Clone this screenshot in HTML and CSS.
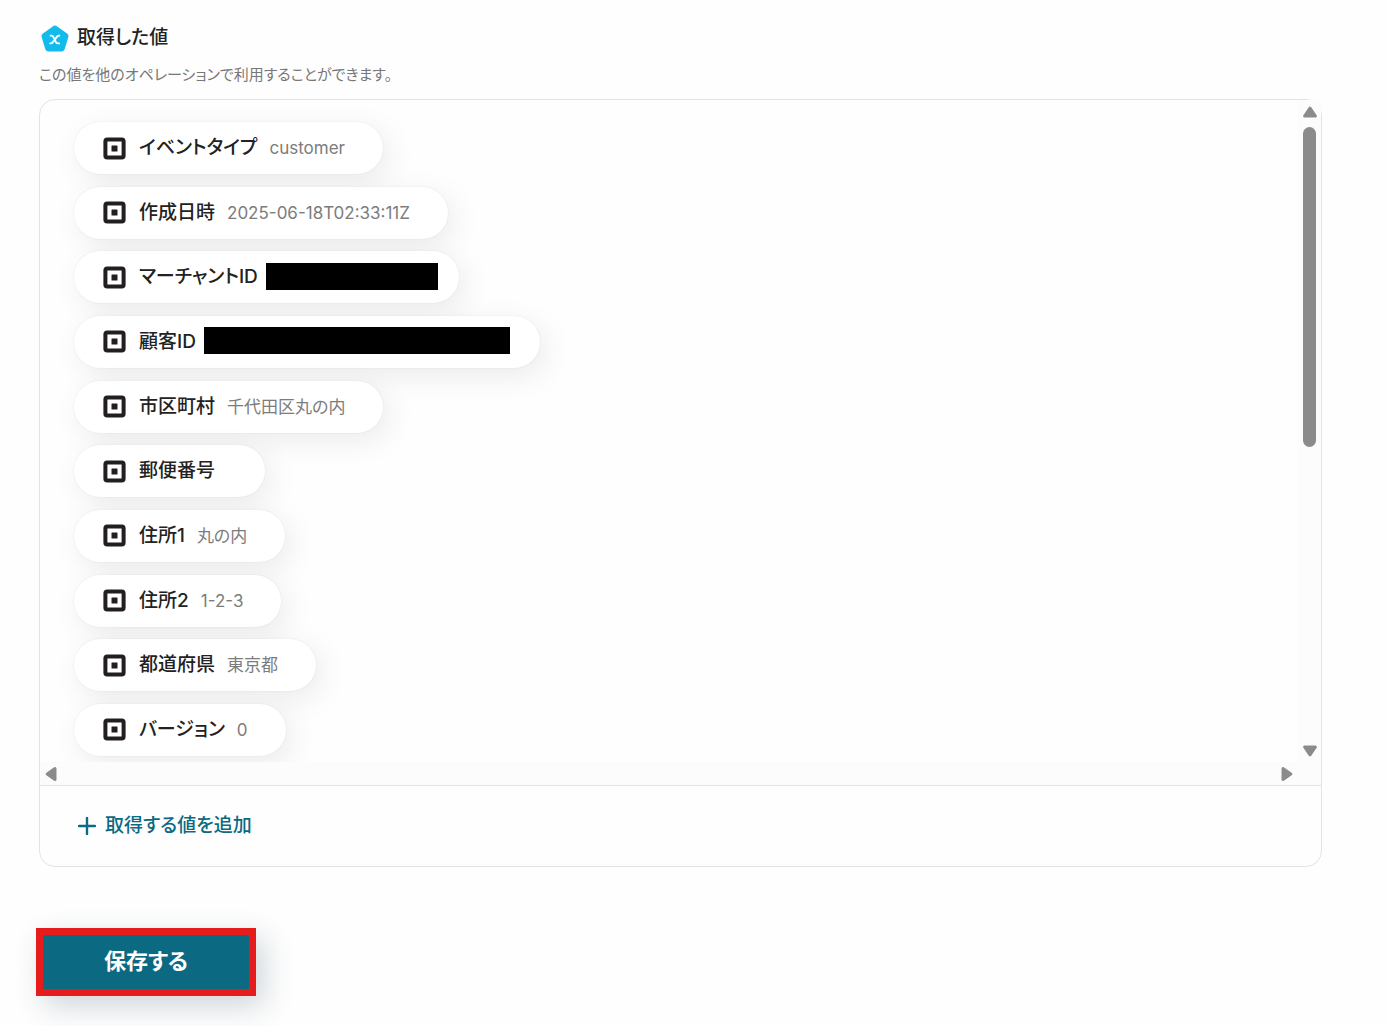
FILE: index.html
```html
<!DOCTYPE html>
<html lang="ja">
<head>
    <meta charset="UTF-8">
    <meta name="viewport" content="width=device-width, initial-scale=1.0">
    <title>取得した値</title>
    <link rel="stylesheet" href="styles.css">
</head>
<body>
    <!-- shared icon for every value -->
    <svg class="defs" aria-hidden="true">
        <symbol id="square-icon" viewBox="0 0 23 23">
            <rect x="2.4" y="2.4" width="18.2" height="18.2" rx="1.8" fill="none" stroke="#231f20" stroke-width="4"/>
            <rect x="8.5" y="8.5" width="6" height="6" rx="0.6" fill="#231f20"/>
        </symbol>
    </svg>

    <main class="page">
        <div class="heading">
            <svg class="heading-icon" viewBox="0 0 28 27" aria-hidden="true">
                <path d="M12.2 1.2Q14 0 15.8 1.2L26.4 8.8Q28 10 27.4 12L23.6 24.2Q22.8 26.4 20.6 26.4H7.4Q5.2 26.4 4.4 24.2L.6 12Q0 10 1.6 8.8Z" fill="#12bbea"/>
                <path d="M9.6 10.6h1q1.1 0 1.6 1.1l2.8 5.6q.6 1.1 1.8 1.1h1.4M18.4 10.6h-.6q-1 0-1.7 1L11.6 17.4q-.8 1-1.8 1h-.6" fill="none" stroke="#fff" stroke-width="1.9" stroke-linecap="round"/>
            </svg>
            <h1>取得した値</h1>
        </div>
        <p class="description">この値を他のオペレーションで利用することができます。</p>

        <section class="card">
            <div class="scroller">
                <ul class="values">
                    <li class="pill"><svg class="icon"><use href="#square-icon"/></svg><span class="label">イベントタイプ</span><span class="value">customer</span></li>
                    <li class="pill"><svg class="icon"><use href="#square-icon"/></svg><span class="label">作成日時</span><span class="value">2025-06-18T02:33:11Z</span></li>
                    <li class="pill"><svg class="icon"><use href="#square-icon"/></svg><span class="label">マーチャントID</span><span class="masked masked-short"></span></li>
                    <li class="pill"><svg class="icon"><use href="#square-icon"/></svg><span class="label">顧客ID</span><span class="masked masked-long"></span></li>
                    <li class="pill"><svg class="icon"><use href="#square-icon"/></svg><span class="label">市区町村</span><span class="value">千代田区丸の内</span></li>
                    <li class="pill"><svg class="icon"><use href="#square-icon"/></svg><span class="label">郵便番号</span><span class="value"></span></li>
                    <li class="pill"><svg class="icon"><use href="#square-icon"/></svg><span class="label">住所1</span><span class="value">丸の内</span></li>
                    <li class="pill"><svg class="icon"><use href="#square-icon"/></svg><span class="label">住所2</span><span class="value">1-2-3</span></li>
                    <li class="pill"><svg class="icon"><use href="#square-icon"/></svg><span class="label">都道府県</span><span class="value">東京都</span></li>
                    <li class="pill"><svg class="icon"><use href="#square-icon"/></svg><span class="label">バージョン</span><span class="value">0</span></li>
                </ul>
                <div class="bar bar-vertical" aria-hidden="true">
                    <svg class="arrow" viewBox="0 0 16 12"><path d="M8 2.2L13.4 10H2.6Z"/></svg>
                    <div class="thumb"></div>
                    <svg class="arrow arrow-down" viewBox="0 0 16 12"><path d="M8 9.8L2.6 2H13.4Z"/></svg>
                </div>
                <div class="bar bar-horizontal" aria-hidden="true">
                    <svg class="arrow-side" viewBox="0 0 12 16"><path d="M2.2 8L10 2.6V13.4Z"/></svg>
                    <svg class="arrow-side" viewBox="0 0 12 16"><path d="M9.8 8L2 2.6V13.4Z"/></svg>
                </div>
                <div class="bar"></div>
            </div>
            <div class="card-footer">
                <button type="button" class="add-button">
                    <svg class="plus" viewBox="0 0 18 18" aria-hidden="true"><path d="M9 1V17M1 9H17"/></svg>
                    <span class="add-text">取得する値を追加</span>
                </button>
            </div>
        </section>

        <button type="submit" class="save-button">保存する</button>
    </main>
</body>
</html>
```
FILE: styles.css
```css
* {
    box-sizing: border-box;
}
body {
    margin: 0;
    background-color: #fefefe;
    font-family: Inter, "Noto Sans CJK JP", sans-serif;
    font-feature-settings: "palt";
    color: #222;
}
button {
    font-family: inherit;
    font-feature-settings: inherit;
    cursor: pointer;
}
.defs {
    display: none;
}
.page {
    padding: 23px 65px 30px 39px;
}
.heading {
    display: flex;
    align-items: center;
    gap: 8px;
    padding-left: 2px;
}
.heading-icon {
    width: 28px;
    height: 27px;
}
h1 {
    margin: 0;
    font-size: 19px;
    line-height: 30px;
    font-weight: 500;
}
.description {
    margin: 10px 0 12px;
    font-size: 15px;
    line-height: 24px;
    color: #777;
}
.card {
    border: 1px solid #e3e3e3;
    border-radius: 16px;
}
.scroller {
    display: grid;
    grid-template-columns: 1fr 23px;
    grid-template-rows: 662px 23px;
    border-bottom: 1px solid #e3e3e3;
}
.values {
    display: flex;
    flex-direction: column;
    align-items: flex-start;
    justify-content: space-between;
    margin: 0;
    padding: 22px 34px 6px;
    list-style: none;
    overflow: hidden;
}
.pill {
    display: flex;
    align-items: center;
    height: 52px;
    padding: 0 38px 0 29px;
    border-radius: 26px;
    background-color: #fff;
    box-shadow: 0 0 2px rgba(0, 0, 0, 0.08), 6px 8px 30px rgba(0, 0, 0, 0.08);
}
.icon {
    width: 23px;
    height: 23px;
    margin-right: 13px;
}
.label {
    margin-right: 12px;
    font-size: 19px;
    line-height: 28px;
    font-weight: 500;
}
.value {
    font-size: 17px;
    line-height: 24px;
    color: #7c7c7c;
}
.masked {
    height: 27px;
    margin-bottom: 2px;
    background-color: #000;
}
.masked-short {
    width: 172px;
    margin-left: -4px;
    margin-right: -17px;
}
.masked-long {
    width: 306px;
    margin-left: -4px;
    margin-right: -8px;
}
/* scroll bars */
.bar {
    background-color: #fcfcfc;
}
.bar-vertical {
    display: flex;
    flex-direction: column;
    align-items: center;
    padding: 6px 0 5px;
}
.bar-horizontal {
    display: flex;
    align-items: center;
    justify-content: space-between;
    padding: 0 5px;
}
.arrow, .arrow-side {
    fill: #8b8b8b;
    stroke: #8b8b8b;
    stroke-width: 3;
    stroke-linejoin: round;
}
.arrow {
    width: 16px;
    height: 12px;
}
.arrow-side {
    width: 12px;
    height: 16px;
}
.arrow-down {
    margin-top: auto;
}
.thumb {
    width: 13px;
    height: 320px;
    margin-top: 9px;
    border-radius: 7px;
    background-color: #8b8b8b;
}
.card-footer {
    padding: 20px 38px;
}
.add-button {
    display: flex;
    align-items: center;
    gap: 9px;
    height: 40px;
    padding: 0;
    border: none;
    background: none;
    font-size: 19px;
    font-weight: 500;
    color: #0b6a82;
}
.add-text {
    padding-bottom: 5px;
}
.plus {
    width: 18px;
    height: 18px;
    fill: none;
    stroke: #0b6a82;
    stroke-width: 2.4;
    stroke-linecap: round;
}
.save-button {
    display: block;
    margin: 61px 0 0 -3px;
    padding: 0 61px 6px;
    height: 68px;
    border: 7px solid #e61c1c;
    background-color: #0b6a82;
    box-shadow: 8px 10px 30px rgba(20, 50, 70, 0.2);
    font-size: 22px;
    font-weight: 700;
    color: #fff;
}
```
